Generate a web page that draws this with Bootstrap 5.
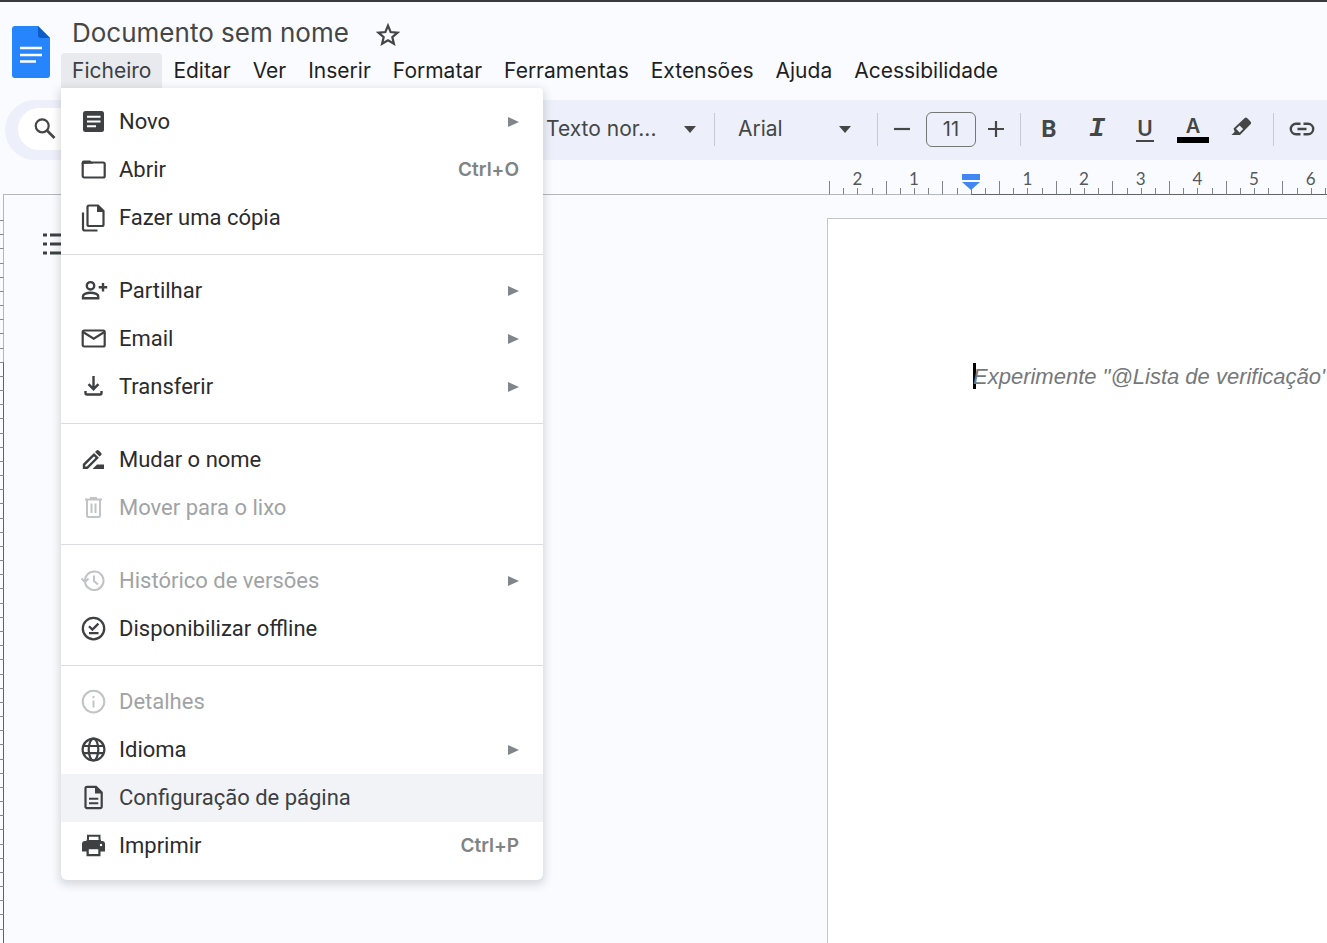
<!DOCTYPE html>
<html lang="pt">
<head>
<meta charset="utf-8">
<meta name="viewport" content="width=device-width, initial-scale=1">
<title>Documento sem nome</title>
<link href="https://cdn.jsdelivr.net/npm/bootstrap@5.3.0/dist/css/bootstrap.min.css" rel="stylesheet">
<style>
  :root { --ink: #444746; --ui: Inter, "Open Sans", sans-serif; --line: #b4b7bb; --line-dark: #5f6368; }
  body { background: #f9fbff; font-family: var(--ui); color: #1f1f1f; }
  svg { display: block; flex: none; }
  .app { border-top: 2px solid #3a3a3c; }

  /* Header */
  .head { padding: 14px 0 12px 12px; gap: 10px; }
  .logo { margin-top: 10px; }
  .title-row { height: 34px; margin-left: 11px; gap: 15px; }
  .title-input { width: 288px; padding: 0; border: 0; background: none; font-size: 26px; line-height: 32px; color: #444746; }
  .star { padding: 4px 0 0; color: var(--ink); }
  .menubar { margin-top: 3px; }
  .menubar .nav-link { padding: 0 11px; font-size: 21px; line-height: 35px; color: #1f1f1f; white-space: nowrap; }
  .menubar .nav-link.open { background: #e8eaed; color: #3c4043; border-radius: 4px 4px 0 0; }

  /* File menu */
  .file-menu { top: 100%; left: 0; width: 482px; padding: 10px 0; border: 0; border-radius: 0 4px 6px 6px; font-family: Roboto, sans-serif; box-shadow: 0 3px 9px 2px rgba(60,64,67,.18); }
  .file-menu .dropdown-item { display: flex; align-items: center; gap: 11px; height: 48px; padding: 0 24px 0 19px; font-size: 22px; line-height: 28px; color: #2b2c2e; }
  .file-menu .dropdown-item > svg { color: #3f4042; }
  .file-menu .dropdown-item.current { background: #f1f3f6; color: #3c4043; }
  .file-menu .dropdown-item.disabled { color: #a0a3a6; }
  .file-menu .dropdown-item.disabled > svg:first-child { color: #c1c3c5; }
  .file-menu .dropdown-item > svg.caret { color: #80868b; margin-left: auto; }
  .file-menu kbd { margin-left: auto; padding: 0; background: none; color: #808386; font: 600 19px/28px var(--ui); }
  .file-menu .dropdown-divider { margin: 12px 0; border-color: #dadce0; opacity: 1; }

  /* Toolbar */
  .tools { height: 60px; margin-left: 5px; padding: 0 0 2px 13px; border-radius: 30px 0 0 30px; background: #edf0fa; color: var(--ink); }
  .search-pill { flex: 0 0 506px; height: 42px; margin-right: 11px; padding: 0 15px; background: #fff; border-radius: 21px; gap: 12px; }
  .search-pill input { border: 0; background: none; width: 100px; }
  .tools select { height: 40px; padding: 0 32px 0 11px; border: 0; font-size: 21px; line-height: 40px; color: var(--ink); background-color: transparent; background-size: 12px 7px; background-position: right 10px center;
    background-image: url("data:image/svg+xml,%3Csvg xmlns='http://www.w3.org/2000/svg' viewBox='0 0 12 7'%3E%3Cpath d='M0 0h12L6 7z' fill='%23444746'/%3E%3C/svg%3E"); }
  .style-select { flex: 0 0 171px; }
  .font-select { flex: 0 0 134px; }
  .rule { flex: none; width: 1px; height: 33px; background: #c7cad3; }
  .tool { flex: none; width: 32px; height: 40px; padding: 0; border: 0; color: var(--ink); font-size: 22px; line-height: 24px; display: flex; align-items: center; justify-content: center; }
  .size-input { flex: none; width: 50px; height: 35px; padding: 0; text-align: center; border: 1px solid #747775; border-radius: 6px; background: none; font-size: 20px; color: var(--ink); }
  .tool-b { font-family: Roboto, sans-serif; font-weight: 700; font-size: 24px; }
  .tool-i { font: italic 700 27px/24px "Liberation Mono", monospace; }
  .tool-u span { border-bottom: 2px solid; width: 18px; line-height: 23px; font-weight: 600; font-size: 21px; }
  .tool-a span { border-bottom: 6px solid #000; width: 33px; line-height: 22px; font-weight: 600; font-size: 20px; }

  /* Rulers and canvas */
  .h-ruler { height: 35px; margin-left: 3px; }
  .h-ruler .lead-line { flex: 0 0 826px; border-bottom: 1px solid var(--line); }
  .cms { flex: none; width: 510px; display: grid; grid-template-columns: repeat(9, 1fr); font: 17px/20px Lato, sans-serif; color: #55585c; }
  .cm { position: relative; display: flex; align-items: flex-end; }
  .cm i { flex: 1 1 0; height: 7px; border-left: 1px solid #80848a; border-bottom: 1px solid var(--line-dark); }
  .cm i:first-of-type { height: 14px; }
  .cm.margin i, .cm.origin i:nth-of-type(-n+2) { border-bottom-color: var(--line); }
  .cm span { position: absolute; top: 9px; left: 0; right: 0; text-align: center; }
  .cm .marker { position: absolute; top: 13px; left: 50%; transform: translateX(-50%); }
  .canvas { min-height: 0; flex: 1 1 0; }
  .v-ruler { flex: 0 0 4px; padding-top: 25px; border-right: 1px solid var(--line); display: flex; flex-direction: column; }
  .v-ruler i { flex: 1 1 0; margin-right: -1px; border-top: 1px solid #85888c; border-right: 1px solid var(--line-dark); }
  .v-ruler i:nth-child(-n+10) { border-right-color: var(--line); }
  .outline { flex: 0 0 auto; padding: 0; margin: 38px 0 0 39px; width: 30px; height: 22px; border: 0; color: #3c4043; }
  .sheet { flex: 1 1 auto; margin: 23px 0 0 754px; padding: 144px 0 0 145px; background: #fff; border: solid #c4c7ca; border-width: 1px 0 0 1px; overflow: hidden; }
  .prompt { margin: 0; border-left: 3px solid #000; height: 26px; white-space: nowrap; font: italic 22px/27px "Liberation Sans", Arial, sans-serif; color: #75787b; }
  .prompt span { margin-left: -3px; }
</style>
</head>
<body>
<div class="app d-flex flex-column vh-100 overflow-hidden">
  <header class="head d-flex align-items-start">
    <a href="#" class="logo" aria-label="Página inicial">
      <svg width="39" height="52" viewBox="0 0 39 52"><path d="M3 0h23l12 12v37a3 3 0 0 1-3 3H3a3 3 0 0 1-3-3V3a3 3 0 0 1 3-3z" fill="#2684fc"/><path d="M26 0l12 12H29a3 3 0 0 1-3-3z" fill="#0d5bc4"/><path d="M8 22h22M8 29h22M8 35.500h16" stroke="#fff" stroke-width="2.600"/></svg>
    </a>
    <div>
      <div class="title-row d-flex align-items-center">
        <input class="title-input" type="text" value="Documento sem nome" aria-label="Mudar o nome">
        <button class="btn star" aria-label="Marcar com estrela"><svg width="24" height="24" viewBox="0 0 24 24"><path d="M12 2.600l2.600 6.400 6.900.6-5.200 4.500 1.600 6.700-5.900-3.600-5.900 3.600 1.600-6.700L2.500 9.600l6.900-.6z" fill="none" stroke="currentColor" stroke-width="2.200"/></svg></button>
      </div>
      <ul class="menubar nav flex-nowrap">
        <li class="nav-item dropdown">
          <a class="nav-link open" href="#" role="button" aria-expanded="true">Ficheiro</a>
          <div class="dropdown-menu file-menu show">
            <button class="dropdown-item"><svg width="28" height="28" viewBox="0 0 28 28"><rect x="3" y="3" width="21" height="21" rx="2.500" fill="currentColor"/><path d="M7 8.700h13.500M7 13.500h13.500M7 18.300h9" stroke="#fff" stroke-width="2"/></svg>Novo<svg class="caret" width="11" height="10"><path d="M0 0l11 5-11 5z" fill="currentColor"/></svg></button>
            <button class="dropdown-item"><svg width="28" height="28" viewBox="0 0 28 28"><rect x="2.700" y="6.500" width="22" height="15" rx="1.500" fill="none" stroke="currentColor" stroke-width="2.200"/><path d="M1.700 8V6.500a2 2 0 0 1 2-2h6.500l3 3z" fill="currentColor"/></svg>Abrir<kbd>Ctrl+O</kbd></button>
            <button class="dropdown-item"><svg width="28" height="28" viewBox="0 0 28 28"><path d="M9 1.500h9l5.500 5.500v13.500a1.500 1.500 0 0 1-1.500 1.500H9a1.500 1.500 0 0 1-1.500-1.500V3A1.500 1.500 0 0 1 9 1.500zM3 8.500v16a2 2 0 0 0 2 2h12.500" fill="none" stroke="currentColor" stroke-width="2.200"/><path d="M17 1l7 7h-7z" fill="currentColor"/></svg>Fazer uma cópia</button>
            <hr class="dropdown-divider">
            <button class="dropdown-item"><svg width="28" height="28" viewBox="0 0 28 28" fill="none" stroke="currentColor" stroke-width="2.400"><circle cx="10.500" cy="8.800" r="3.700"/><path d="M3 21.300v-2c0-2.200 4-3.600 7.500-3.600s7.700 1.400 7.700 3.600v2zM23 6v8.500M18.700 10.200h8.500"/></svg>Partilhar<svg class="caret" width="11" height="10"><path d="M0 0l11 5-11 5z" fill="currentColor"/></svg></button>
            <button class="dropdown-item"><svg width="28" height="28" viewBox="0 0 28 28" fill="none" stroke="currentColor" stroke-width="2.200"><rect x="2.700" y="5.500" width="22" height="16" rx="1.500"/><path d="M3 7l10.700 6.700L24.400 7"/></svg>Email<svg class="caret" width="11" height="10"><path d="M0 0l11 5-11 5z" fill="currentColor"/></svg></button>
            <button class="dropdown-item"><svg width="28" height="28" viewBox="0 0 28 28" fill="none" stroke="currentColor" stroke-width="2.400"><path d="M13.500 3v13M8.500 11.200l5 5 5-5M5.500 18v2a1.500 1.500 0 0 0 1.500 1.500h13a1.500 1.500 0 0 0 1.500-1.500v-2"/></svg>Transferir<svg class="caret" width="11" height="10"><path d="M0 0l11 5-11 5z" fill="currentColor"/></svg></button>
            <hr class="dropdown-divider">
            <button class="dropdown-item"><svg width="28" height="28" viewBox="0 0 28 28"><path d="M4 21.800v-3.200L14 8.600l3.200 3.200-10 10z" fill="none" stroke="currentColor" stroke-width="2.400"/><path d="M15 6l1.600-1.600a1.500 1.500 0 0 1 2.100 0l2.500 2.500a1.500 1.500 0 0 1 0 2.100l-1.600 1.600zM12.500 23l4.500-4.500h7V23z" fill="currentColor"/></svg>Mudar o nome</button>
            <button class="dropdown-item disabled" disabled><svg width="28" height="28" viewBox="0 0 28 28" fill="none" stroke="currentColor" stroke-width="2"><path d="M5 5.500h17M10 4h7M7 5.500v16a1.500 1.500 0 0 0 1.500 1.500h10a1.500 1.500 0 0 0 1.500-1.500v-16M11.500 9.500v9.500M15.500 9.500v9.500"/></svg>Mover para o lixo</button>
            <hr class="dropdown-divider">
            <button class="dropdown-item disabled" disabled><svg width="28" height="28" viewBox="0 0 28 28" fill="none" stroke="currentColor" stroke-width="2"><path d="M5 15a9.300 9.300 0 1 0 2.500-7.700A9.500 9.500 0 0 0 5 13.500M1.500 11.500l3.500 3.500 3.500-3.500M14 8.500v5.500l4 3.500"/></svg>Histórico de versões<svg class="caret" width="11" height="10"><path d="M0 0l11 5-11 5z" fill="currentColor"/></svg></button>
            <button class="dropdown-item"><svg width="28" height="28" viewBox="0 0 28 28" fill="none" stroke="currentColor" stroke-width="2.300"><circle cx="13.500" cy="13.600" r="10.700"/><path d="M9 11.200l3.400 3.400 6-6M9 18.200h9.500"/></svg>Disponibilizar offline</button>
            <hr class="dropdown-divider">
            <button class="dropdown-item disabled" disabled><svg width="28" height="28" viewBox="0 0 28 28" fill="none" stroke="currentColor" stroke-width="2"><circle cx="13.500" cy="13.600" r="10.800"/><path d="M13.500 12.500v7M13.500 8v2.200"/></svg>Detalhes</button>
            <button class="dropdown-item"><svg width="28" height="28" viewBox="0 0 28 28" fill="none" stroke="currentColor" stroke-width="2.200"><circle cx="13.500" cy="13.600" r="10.900"/><ellipse cx="13.500" cy="13.600" rx="4.800" ry="10.900"/><path d="M3.300 10h20.400M3.300 17.200h20.400"/></svg>Idioma<svg class="caret" width="11" height="10"><path d="M0 0l11 5-11 5z" fill="currentColor"/></svg></button>
            <button class="dropdown-item current"><svg width="28" height="28" viewBox="0 0 28 28" fill="none" stroke="currentColor" stroke-width="2.200"><path d="M7 2.800h9l5.700 5.700v14.200a1.500 1.500 0 0 1-1.500 1.500H7a1.500 1.500 0 0 1-1.500-1.500V4.300A1.500 1.500 0 0 1 7 2.800z"/><path d="M15 2.500l7 7h-7z" fill="currentColor" stroke="none"/><path d="M9 14.800h9.300M9 19.300h9.300" stroke-width="2"/></svg>Configuração de página</button>
            <button class="dropdown-item"><svg width="28" height="28" viewBox="0 0 28 28"><path d="M7 2.700h13.500v5H7zM5 9h17a3 3 0 0 1 3 3v7.500h-4.500v4.700H6.500v-4.700H2V12a3 3 0 0 1 3-3z" fill="currentColor"/><path d="M6.500 7.500h14.500v2H6.500z" fill="currentColor"/><path d="M9 4.800h9.500v3.200H9zM8.800 17.200h9.500V22H8.800z" fill="#fff"/><circle cx="21" cy="13" r="1.200" fill="#fff"/></svg>Imprimir<kbd>Ctrl+P</kbd></button>
          </div>
        </li>
        <li class="nav-item"><a class="nav-link" href="#">Editar</a></li>
        <li class="nav-item"><a class="nav-link" href="#">Ver</a></li>
        <li class="nav-item"><a class="nav-link" href="#">Inserir</a></li>
        <li class="nav-item"><a class="nav-link" href="#">Formatar</a></li>
        <li class="nav-item"><a class="nav-link" href="#">Ferramentas</a></li>
        <li class="nav-item"><a class="nav-link" href="#">Extensões</a></li>
        <li class="nav-item"><a class="nav-link" href="#">Ajuda</a></li>
        <li class="nav-item"><a class="nav-link" href="#">Acessibilidade</a></li>
      </ul>
    </div>
  </header>

  <div class="tools d-flex align-items-center flex-shrink-0" role="toolbar">
    <label class="search-pill d-flex align-items-center">
      <svg width="24" height="24" viewBox="0 0 24 24" fill="none" stroke="currentColor"><circle cx="9.200" cy="8.800" r="6.500" stroke-width="2.200"/><path d="M14 13.500l7.500 7.500" stroke-width="2.600"/></svg>
      <input type="search" aria-label="Menus">
    </label>
    <select class="form-select style-select" aria-label="Estilos"><option>Texto nor...</option></select>
    <div class="rule ms-2 me-1 order-0"></div>
    <select class="form-select font-select ms-2" aria-label="Tipo de letra"><option>Arial</option></select>
    <div class="rule ms-3 me-2"></div>
    <button class="btn tool me-2" aria-label="Diminuir tamanho"><svg width="18" height="18" viewBox="0 0 18 18"><path d="M1 9h16" stroke="currentColor" stroke-width="2.200"/></svg></button>
    <input class="size-input" type="text" value="11" aria-label="Tamanho da letra">
    <button class="btn tool ms-1 me-2" aria-label="Aumentar tamanho"><svg width="18" height="18" viewBox="0 0 18 18"><path d="M1 9h16M9 1v16" stroke="currentColor" stroke-width="2.200"/></svg></button>
    <div class="rule me-2"></div>
    <button class="btn tool tool-b ms-1 me-3" aria-label="Negrito">B</button>
    <button class="btn tool tool-i me-3" aria-label="Itálico">I</button>
    <button class="btn tool tool-u me-3" aria-label="Sublinhado"><span>U</span></button>
    <button class="btn tool tool-a me-3" aria-label="Cor do texto"><span>A</span></button>
    <button class="btn tool me-3" aria-label="Cor de realce"><svg class="mb-1" width="24" height="24" viewBox="0 0 24 24"><path d="M4.500 13.500L15.500 3.200a2 2 0 0 1 2.800 0l3.200 3.200a2 2 0 0 1 0 2.800L11 20H2.500l3.200-3.200z" fill="currentColor"/><path d="M7 13.800l3.600-3.300 3.500 3.500-3.500 3.400z" fill="#edf0fa"/></svg></button>
    <div class="rule me-2"></div>
    <button class="btn tool ms-1" aria-label="Inserir link"><svg width="26" height="26" viewBox="0 0 26 26" fill="none" stroke="currentColor" stroke-width="2.400"><path d="M11.500 7.800H7a5.200 5.200 0 0 0 0 10.400h4.500M14.500 7.800H19a5.200 5.200 0 0 1 0 10.400h-4.500M8.500 13h9"/></svg></button>
  </div>

  <div class="h-ruler d-flex flex-shrink-0">
    <div class="lead-line"></div>
    <div class="cms">
      <div class="cm margin"><span>2</span><i></i><i></i><i></i><i></i></div>
      <div class="cm margin"><span>1</span><i></i><i></i><i></i><i></i></div>
      <div class="cm origin"><i></i><i></i><i></i><i></i><svg class="marker" width="18" height="17" viewBox="0 0 18 17"><path d="M0 1h18v6H0zM0 9h18l-9 8z" fill="#4285f4"/></svg></div>
      <div class="cm"><span>1</span><i></i><i></i><i></i><i></i></div>
      <div class="cm"><span>2</span><i></i><i></i><i></i><i></i></div>
      <div class="cm"><span>3</span><i></i><i></i><i></i><i></i></div>
      <div class="cm"><span>4</span><i></i><i></i><i></i><i></i></div>
      <div class="cm"><span>5</span><i></i><i></i><i></i><i></i></div>
      <div class="cm"><span>6</span><i></i><i></i><i></i><i></i></div>
    </div>
  </div>

  <main class="canvas d-flex">
    <div class="v-ruler" id="vRuler"></div>
    <button class="btn outline" aria-label="Mostrar esquema"><svg width="30" height="22" viewBox="0 0 30 22"><path d="M0 2h4M0 11h4M0 20h4M7 2h23M7 11h23M7 20h23" stroke="currentColor" stroke-width="3.200"/></svg></button>
    <div class="sheet">
      <p class="prompt"><span>Experimente "@Lista de verificação"</span></p>
    </div>
  </main>
</div>
<script src="https://cdn.jsdelivr.net/npm/bootstrap@5.3.0/dist/js/bootstrap.bundle.min.js"></script>
<script>
  // Quarter-centimetre ticks down the left edge
  document.getElementById('vRuler').innerHTML = '<i></i>'.repeat(51);
</script>
</body>
</html>
